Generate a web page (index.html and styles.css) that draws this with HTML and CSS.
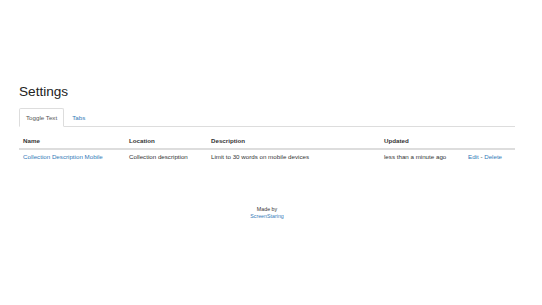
FILE: index.html
```html
<!DOCTYPE html>
<html>
<head>
<meta charset="utf-8">
<link rel="stylesheet" href="styles.css">
</head>
<body>
<div class="container">
  <h1 class="title">Settings</h1>
  <ul class="tabs">
    <li class="tab active"><a>Toggle Text</a></li>
    <li class="tab"><a class="link">Tabs</a></li>
  </ul>
  <table class="table">
    <thead>
      <tr>
        <th class="c-name">Name</th>
        <th class="c-loc">Location</th>
        <th class="c-desc">Description</th>
        <th class="c-upd">Updated</th>
        <th class="c-act"></th>
      </tr>
    </thead>
    <tbody>
      <tr>
        <td><a class="link">Collection Description Mobile</a></td>
        <td>Collection description</td>
        <td>Limit to 30 words on mobile devices</td>
        <td>less than a minute ago</td>
        <td class="nowrap"><a class="link">Edit</a> - <a class="link">Delete</a></td>
      </tr>
    </tbody>
  </table>
  <footer class="footer">
    <div>Made by</div>
    <div><a class="link">ScreenStaring</a></div>
  </footer>
</div>
</body>
</html>
```
FILE: styles.css
```css
html, body {
  margin: 0;
  padding: 0;
  background: #fff;
}
body {
  font-family: "Liberation Sans", Arial, sans-serif;
  font-size: 6.2px;
  color: #333;
}
.container {
  width: 496px;
  margin: 0 0 0 19px;
  padding-top: 84px;
}
.title {
  margin: 0;
  font-size: 13.6px;
  font-weight: 500;
  color: #222;
  line-height: 16px;
}
.tabs {
  list-style: none;
  margin: 8px 0 0 0;
  padding: 0;
  display: flex;
  border-bottom: 1px solid #ddd;
}
.tab {
  margin-bottom: -1px;
}
.tab a {
  display: block;
  padding: 0 6px;
  line-height: 17px;
  border: 1px solid transparent;
  border-radius: 2px 2px 0 0;
}
.tab.active a {
  color: #555;
  border-color: #ddd;
  border-bottom-color: #fff;
  background: #fff;
}
.tab:not(.active) a {
  margin-left: 1px;
}
.link {
  color: #337ab7;
  text-decoration: none;
}
.table {
  width: 100%;
  border-collapse: collapse;
  margin-top: 7px;
}
.table th {
  text-align: left;
  font-weight: bold;
  color: #333;
  padding: 3px 4px;
  line-height: 8px;
  border-bottom: 2px solid #ddd;
}
.table td {
  padding: 3px 4px;
  line-height: 8px;
}
.nowrap { white-space: nowrap; }
.c-name { width: 98px; }
.c-loc { width: 74px; }
.c-desc { width: 165px; }
.c-upd { width: 76px; }
.footer {
  text-align: center;
  margin-top: 42px;
  font-size: 5.3px;
  line-height: 7px;
}
```
